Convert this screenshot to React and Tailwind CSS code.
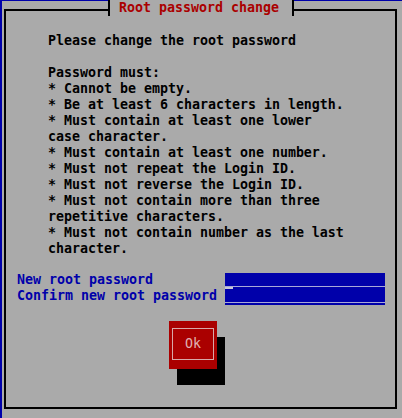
export default function App() {
  const lines = [
    "Please change the root password",
    "",
    "Password must:",
    "* Cannot be empty.",
    "* Be at least 6 characters in length.",
    "* Must contain at least one lower",
    "case character.",
    "* Must contain at least one number.",
    "* Must not repeat the Login ID.",
    "* Must not reverse the Login ID.",
    "* Must not contain more than three",
    "repetitive characters.",
    "* Must not contain number as the last",
    "character.",
  ];
  const mono = { fontFamily: '"DejaVu Sans Mono", "Liberation Mono", monospace' };
  return (
    <div
      className="w-[402px] h-[418px] bg-[#0000aa] overflow-hidden pl-[2px] pt-[1px] text-[13.29px] leading-[16px] font-bold"
      style={mono}
    >
      <div className="w-[400px] h-[417px] bg-[#aaaaaa] pt-[8px] pl-[2px]">
        <div className="relative w-[393px] h-[400px] border-2 border-black">
          <div className="absolute left-[102px] top-[-11px] h-[16px] w-[186px] border-x-2 border-black bg-[#aaaaaa] pl-[9px] text-[#aa0000] whitespace-pre">
            Root password change
          </div>
          <div className="pt-[22px]">
            <div className="pl-[42px] text-black">
              {lines.map((l, i) => (
                <div key={i} className="h-[16px] whitespace-pre">
                  {l}
                </div>
              ))}
            </div>
            <div className="mt-[15px] flex pl-[11px]">
              <div className="w-[208px] text-[#0000aa]">
                <div className="h-[16px] whitespace-pre">New root password</div>
                <div className="h-[16px] whitespace-pre">Confirm new root password</div>
              </div>
              <div className="w-[160px] mt-[1px] flex flex-col">
                <div className="h-[13px] bg-[#0000aa]" />
                <div className="h-[1px] bg-[#a8a8d8]" />
                <div className="h-[2px] bg-[#0000aa] flex">
                  <div className="w-[8px] h-[2px] bg-[#c8c8d8]" />
                </div>
                <div className="h-[13px] bg-[#0000aa]" />
                <div className="h-[1px] bg-[#a8a8d8]" />
                <div className="h-[2px] bg-[#0000aa]" />
              </div>
            </div>
            <div className="mt-[16px] ml-[163px] relative w-[48px] h-[48px]">
              <div className="absolute left-[8px] top-[16px] w-[48px] h-[48px] bg-black" />
              <div className="relative w-[48px] h-[48px] bg-[#aa0000] pt-[7px] pl-[3px] pr-[3px] pb-[9px]">
                <div className="w-full h-full border border-[#d8a8a8] flex items-center justify-center text-[#e0b0b0] font-normal">
                  Ok
                </div>
              </div>
            </div>
          </div>
        </div>
      </div>
    </div>
  );
}
